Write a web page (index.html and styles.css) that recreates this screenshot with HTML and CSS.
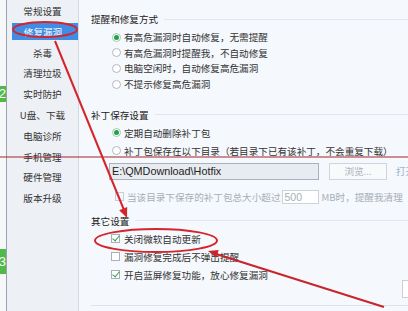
FILE: index.html
```html
<!DOCTYPE html>
<html lang="zh-CN">
<head>
<meta charset="utf-8">
<title>修复漏洞设置</title>
<link rel="stylesheet" href="styles.css">
</head>
<body>
<div class="app">
  <div class="strip">
    <div class="badge b2">2</div>
    <div class="badge b3">3</div>
  </div>
  <nav class="side">
    <div class="nav-item">常规设置</div>
    <div class="nav-item active">修复漏洞</div>
    <div class="nav-item">杀毒</div>
    <div class="nav-item">清理垃圾</div>
    <div class="nav-item">实时防护</div>
    <div class="nav-item">U盘、下载</div>
    <div class="nav-item">电脑诊所</div>
    <div class="nav-item">手机管理</div>
    <div class="nav-item">硬件管理</div>
    <div class="nav-item">版本升级</div>
  </nav>
  <main class="main">
    <div class="sec-head h1"><span>提醒和修复方式</span></div>
    <div class="opts s1">
      <div class="opt"><i class="radio on"></i>有高危漏洞时自动修复，无需提醒</div>
      <div class="opt"><i class="radio"></i>有高危漏洞时提醒我，不自动修复</div>
      <div class="opt"><i class="radio"></i>电脑空闲时，自动修复高危漏洞</div>
      <div class="opt"><i class="radio"></i>不提示修复高危漏洞</div>
    </div>
    <div class="sec-head h2"><span>补丁保存设置</span></div>
    <div class="opts s2">
      <div class="opt"><i class="radio on"></i>定期自动删除补丁包</div>
      <div class="opt"><i class="radio"></i>补丁包保存在以下目录（若目录下已有该补丁，不会重复下载）</div>
    </div>
    <div class="path-row">
      <div class="path">E:\QMDownload\Hotfix</div>
      <div class="btn">浏览...</div>
      <div class="link">打开目录</div>
    </div>
    <div class="limit-row">
      <i class="check dis"></i>
      <span class="dis-text">当该目录下保存的补丁包总大小超过</span>
      <span class="num">500</span>
      <span class="dis-text unit">MB时，提醒我清理</span>
    </div>
    <div class="sec-head h3"><span>其它设置</span></div>
    <div class="opts s3">
      <div class="opt cb"><i class="check on"></i>关闭微软自动更新</div>
      <div class="opt cb"><i class="check"></i>漏洞修复完成后不弹出提醒</div>
      <div class="opt cb"><i class="check on"></i>开启蓝屏修复功能，放心修复漏洞</div>
    </div>
    <div class="footer"><div class="fbtn"></div></div>
  </main>
  <svg class="marks" width="408" height="311" viewBox="0 0 408 311">
    <line x1="0" y1="157" x2="408" y2="157" stroke="#a3242a" stroke-width="1.2"/>
    <ellipse cx="45" cy="29.5" rx="32" ry="7.5" fill="none" stroke="#d3262c" stroke-width="2"/>
    <ellipse cx="156" cy="240.5" rx="61" ry="11.5" fill="none" stroke="#d3262c" stroke-width="2"/>
    <line x1="55" y1="41" x2="124" y2="210" stroke="#d3262c" stroke-width="2"/>
    <polygon points="127,218 127.2,207 119.2,210.3" fill="#d3262c"/>
    <line x1="384" y1="307" x2="216" y2="254" stroke="#c8242a" stroke-width="2"/>
    <polygon points="208,251 218.7,250 216.3,257.8" fill="#c8242a"/>
  </svg>
</div>
</body>
</html>
```

FILE: styles.css
```css
* { box-sizing: border-box; margin: 0; padding: 0; }
html, body { width: 408px; height: 311px; overflow: hidden; }
body {
  font-family: "Noto Sans CJK SC", "Noto Sans", sans-serif;
  font-size: 9.6px;
  color: #333;
  background: #f5f8fc;
}
.app {
  position: relative;
  display: flex;
  width: 408px;
  height: 311px;
  overflow: hidden;
}
.strip {
  width: 7px;
  flex: none;
  background: #f7f8fa;
  border-right: 1px solid #9aa3ad;
  display: flex;
  flex-direction: column;
  overflow: hidden;
}
.badge {
  width: 14px;
  margin-left: -8px;
  background: #4fba4a;
  color: #fff;
  font-family: "Liberation Sans", sans-serif;
  font-size: 13px;
  text-align: right;
  line-height: 16px;
}
.b2 { margin-top: 86px; height: 16px; }
.b3 { margin-top: 147px; height: 25px; line-height: 25px; }
.side {
  width: 72px;
  flex: none;
  background: #edf0f5;
  border-right: 1px solid #d3d9e1;
  padding-top: 2.5px;
  display: flex;
  flex-direction: column;
  gap: 3.8px;
}
.nav-item {
  height: 17px;
  display: flex;
  align-items: center;
  justify-content: center;
  color: #333;
  white-space: nowrap;
}
.nav-item.active {
  margin-left: 5px;
  background: #3f8de4;
  color: #fff;
  padding-right: 4px;
}
.main {
  flex: 1;
  padding-left: 12px;
  padding-top: 12px;
  display: flex;
  flex-direction: column;
  overflow: hidden;
  min-width: 0;
}
.sec-head {
  height: 14px;
  display: flex;
  align-items: center;
  color: #222;
  white-space: nowrap;
}
.sec-head::after {
  content: "";
  flex: 1;
  height: 1px;
  background: #e1e6ec;
  margin-left: 6px;
}
.h2 { margin-top: 16px; }
.h3 { margin-top: 10px; }
.opts { display: flex; flex-direction: column; }
.opt {
  display: flex;
  align-items: center;
  white-space: nowrap;
  padding-left: 21px;
}
.s1 { margin-top: 3.2px; }
.s1 .opt { height: 15.7px; }
.s2 { margin-top: 2px; }
.s2 .opt { height: 18px; }
.s3 { margin-top: 2px; }
.s3 .opt { height: 18px; padding-left: 20px; }
.radio {
  width: 9px;
  height: 9px;
  border-radius: 50%;
  border: 1px solid #b3b9c2;
  background: #fff;
  margin-right: 3px;
  flex: none;
  display: flex;
  align-items: center;
  justify-content: center;
}
.radio.on { border-color: #9fc9a8; }
.radio.on::after {
  content: "";
  width: 5px;
  height: 5px;
  border-radius: 50%;
  background: #22a046;
}
.check {
  width: 9px;
  height: 9px;
  border: 1px solid #a9b0ba;
  background: #fff;
  margin-right: 4px;
  flex: none;
  position: relative;
}
.check.on::after {
  content: "";
  position: absolute;
  left: 2px;
  top: -1px;
  width: 3px;
  height: 6px;
  border-right: 1.5px solid #2f9f48;
  border-bottom: 1.5px solid #2f9f48;
  transform: rotate(40deg);
}
.check.dis { border-color: #c9ced6; background: #f4f6f9; margin-right: 3px; }
.path-row {
  margin-top: 3px;
  height: 17px;
  display: flex;
  align-items: stretch;
  white-space: nowrap;
}
.path {
  margin-left: 18px;
  width: 210px;
  flex: none;
  background: #e8ebf0;
  border: 1px solid #a8b2bf;
  font-family: "Liberation Sans", sans-serif;
  font-size: 10.8px;
  color: #222;
  line-height: 15px;
  padding-left: 2px;
}
.btn {
  margin-left: 10px;
  width: 58px;
  flex: none;
  border: 1px solid #cfd5dd;
  background: #f8fafc;
  color: #aab1ba;
  text-align: center;
  line-height: 15px;
}
.link {
  margin-left: 9px;
  color: #9db3cc;
  line-height: 17px;
}
.limit-row {
  margin-top: 10px;
  height: 14px;
  display: flex;
  align-items: center;
  white-space: nowrap;
  padding-left: 24px;
}
.dis-text { color: #a7aeb8; }
.num {
  margin-left: 1px;
  width: 37px;
  height: 14px;
  border: 1px solid #cdd3db;
  background: #fff;
  color: #a7aeb8;
  font-family: "Liberation Sans", sans-serif;
  font-size: 10.5px;
  line-height: 12px;
  padding-left: 2px;
  flex: none;
}
.unit { margin-left: 3px; }
.footer {
  margin-top: -4px;
  height: 26px;
  border-bottom: 1px solid #dde2e8;
  display: flex;
  justify-content: flex-end;
  align-items: flex-start;
}
.fbtn {
  width: 30px;
  height: 18px;
  margin-right: -24px;
  background: #fff;
  border: 1px solid #c9cfd7;
  flex: none;
}
.marks {
  position: absolute;
  left: 0;
  top: 0;
  pointer-events: none;
}
```
